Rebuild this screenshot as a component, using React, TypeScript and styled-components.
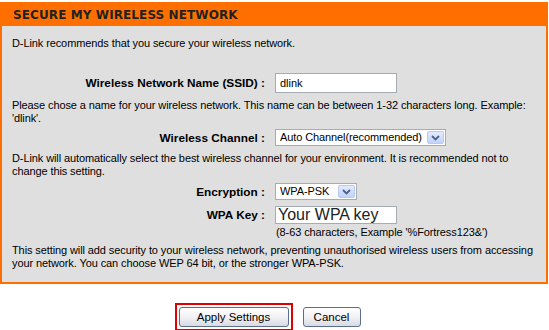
import React, { FC } from 'react'
import styled, { createGlobalStyle } from 'styled-components'

const GlobalStyle = createGlobalStyle`
  html, body {
    margin: 0;
    padding: 0;
    background-color: #fff;
  }

  body {
    font-family: 'Liberation Sans', Arial, sans-serif;
    font-size: 11px;
    color: #000;
  }
`

const StylePage = styled.div`
  width: 549px;
  padding-top: 2px;
`

const StylePanel = styled.section`
  width: 548px;
  box-sizing: border-box;
`

const StyleHeader = styled.h1`
  margin: 0;
  height: 24px;
  box-sizing: border-box;
  padding: 6px 0 0 13px;
  background-color: #ff6f00;
  color: #222;
  font-family: 'DejaVu Sans', Verdana, sans-serif;
  font-size: 12px;
  font-weight: 700;
  line-height: 14px;
  letter-spacing: 0.1px;
`

const StyleBody = styled.div`
  display: flex;
  flex-direction: column;
  padding: 11px 10px 12px 10px;
  background-color: #dfdfdf;
  border: 2px solid #ff6f00;
  border-top: none;
  letter-spacing: -0.1px;
`

const StyleText = styled.p<{ $top: number; $indent?: number }>`
  margin: ${(p) => p.$top}px 0 0 ${(p) => p.$indent ?? 0}px;
  line-height: 13px;
`

const StyleRow = styled.div<{ $top: number }>`
  display: grid;
  grid-template-columns: 253px auto;
  column-gap: 10px;
  align-items: center;
  margin-top: ${(p) => p.$top}px;
`

const StyleLabel = styled.label`
  justify-self: end;
  font-weight: 700;
  font-size: 11.8px;
  letter-spacing: 0;
`

const StyleInput = styled.div<{ $big?: boolean }>`
  width: 122px;
  height: ${(p) => (p.$big ? 18 : 20)}px;
  box-sizing: border-box;
  padding-left: ${(p) => (p.$big ? 2 : 4)}px;
  background-color: #fff;
  border: 1px solid #a5acb2;
  color: ${(p) => (p.$big ? '#222' : '#000')};
  font-size: ${(p) => (p.$big ? 16 : 11)}px;
  line-height: ${(p) => (p.$big ? 16 : 18)}px;
  letter-spacing: 0;
  white-space: nowrap;
  overflow: hidden;
`

const StyleSelect = styled.div<{ $width: number }>`
  display: flex;
  width: ${(p) => p.$width}px;
  height: 17px;
  box-sizing: border-box;
  padding: 1px;
  background-color: #fff;
  border: 1px solid #a5acb2;
`

const StyleSelectValue = styled.span`
  flex: 1;
  padding-left: 3px;
  line-height: 13px;
  white-space: nowrap;
`

const StyleSelectArrow = styled.span`
  display: flex;
  justify-content: center;
  align-items: center;
  width: 17px;
  box-sizing: border-box;
  border: 1px solid #b9c9ef;
  border-radius: 2px;
  background: linear-gradient(#e2eafd, #c1d3fb);
`

const StyleButtons = styled.div`
  display: flex;
  justify-content: center;
  align-items: center;
  gap: 10px;
  margin-top: 19px;
  padding-right: 14px;
`

const StyleFocus = styled.div`
  padding: 2px;
  border: 2px solid #e00000;
`

const StyleButton = styled.button<{ $width: number }>`
  width: ${(p) => p.$width}px;
  height: 20px;
  padding: 0;
  border: 1px solid #5a6f8c;
  border-radius: 3px;
  background: linear-gradient(#ffffff, #f0f0f3 55%, #d8dae4);
  color: #000;
  font-family: 'Liberation Sans', Arial, sans-serif;
  font-size: 11.5px;
`

const Chevron: FC = () => (
  <svg width="9" height="6" viewBox="0 0 9 6">
    <path d="M1 1 L4.5 4.5 L8 1" fill="none" stroke="#4d6185" strokeWidth="1.8" />
  </svg>
)

const App: FC = () => {
  return (
    <StylePage>
      <GlobalStyle />
      <StylePanel>
        <StyleHeader>SECURE MY WIRELESS NETWORK</StyleHeader>
        <StyleBody>
          <StyleText $top={0}>D-Link recommends that you secure your wireless network.</StyleText>

          <StyleRow $top={23}>
            <StyleLabel>Wireless Network Name (SSID) :</StyleLabel>
            <StyleInput>dlink</StyleInput>
          </StyleRow>
          <StyleText $top={6}>
            Please chose a name for your wireless network. This name can be between 1-32 characters long. Example:
            'dlink'.
          </StyleText>

          <StyleRow $top={4}>
            <StyleLabel>Wireless Channel :</StyleLabel>
            <StyleSelect $width={171}>
              <StyleSelectValue>Auto Channel(recommended)</StyleSelectValue>
              <StyleSelectArrow>
                <Chevron />
              </StyleSelectArrow>
            </StyleSelect>
          </StyleRow>
          <StyleText $top={6}>
            D-Link will automatically select the best wireless channel for your environment. It is recommended not to
            change this setting.
          </StyleText>

          <StyleRow $top={5}>
            <StyleLabel>Encryption :</StyleLabel>
            <StyleSelect $width={82}>
              <StyleSelectValue>WPA-PSK</StyleSelectValue>
              <StyleSelectArrow>
                <Chevron />
              </StyleSelectArrow>
            </StyleSelect>
          </StyleRow>

          <StyleRow $top={6}>
            <StyleLabel>WPA Key :</StyleLabel>
            <StyleInput $big>Your WPA key</StyleInput>
          </StyleRow>
          <StyleText $top={2} $indent={264}>
            (8-63 characters, Example '%Fortress123&')
          </StyleText>
          <StyleText $top={5}>
            This setting will add security to your wireless network, preventing unauthorised wireless users from
            accessing your network. You can choose WEP 64 bit, or the stronger WPA-PSK.
          </StyleText>
        </StyleBody>
      </StylePanel>

      <StyleButtons>
        <StyleFocus>
          <StyleButton $width={110}>Apply Settings</StyleButton>
        </StyleFocus>
        <StyleButton $width={58}>Cancel</StyleButton>
      </StyleButtons>
    </StylePage>
  )
}

export default App
